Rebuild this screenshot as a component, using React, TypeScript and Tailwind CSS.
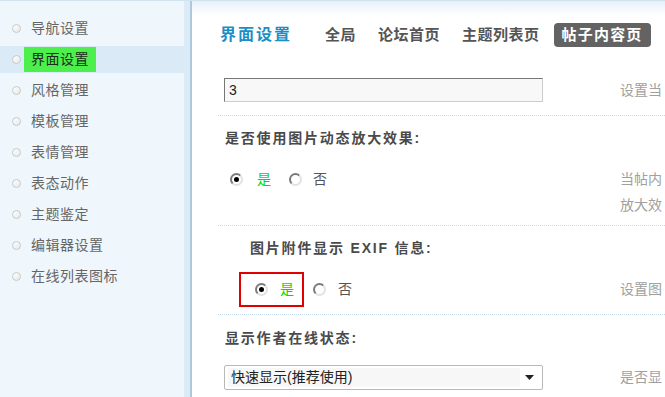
import type { ReactNode } from "react";

const menu = [
  "导航设置",
  "界面设置",
  "风格管理",
  "模板管理",
  "表情管理",
  "表态动作",
  "主题鉴定",
  "编辑器设置",
  "在线列表图标",
];

const tabs = ["全局", "论坛首页", "主题列表页"];

function Radio({ checked }: { checked?: boolean }) {
  return (
    <span className="flex h-[13px] w-[13px] shrink-0 items-center justify-center rounded-full border-2 border-t-[#7a7a7a] border-l-[#7a7a7a] border-b-[#e2e2e2] border-r-[#e2e2e2] bg-white">
      {checked ? <span className="h-[5px] w-[5px] rounded-full bg-black" /> : null}
    </span>
  );
}

function Separator() {
  return <div className="-ml-[6px] border-t border-dotted border-[#c3dcec]" />;
}

function Label({ children, indent }: { children: ReactNode; indent?: boolean }) {
  return (
    <div
      className={`flex h-[22px] items-center text-[14px] font-bold tracking-[1.8px] text-[#4a4a4a] ${
        indent ? "ml-[26px]" : "ml-[1px]"
      }`}
    >
      {children}
    </div>
  );
}

function Row({ children, desc }: { children: ReactNode; desc: ReactNode }) {
  return (
    <div className="flex">
      <div className="w-[396px] shrink-0">{children}</div>
      <div className="whitespace-nowrap text-[14px] text-[#a0a0a0]">{desc}</div>
    </div>
  );
}

export default function App() {
  return (
    <div className="flex h-[397px] w-[665px] overflow-hidden border-t border-[#cfe2f0] bg-white font-['Liberation_Sans','Noto_Sans_CJK_SC',sans-serif]">
      <aside className="flex w-[184px] shrink-0 flex-col gap-[4px] bg-[#eff7fc] pt-[14px]">
        {menu.map((item) => {
          const active = item === "界面设置";
          return (
            <div
              key={item}
              className={`flex h-[27px] items-center pl-[12px] ${active ? "bg-[#dbeaf7]" : ""}`}
            >
              <span className="h-[9px] w-[9px] shrink-0 rounded-full border border-[#c8c8c8] bg-gradient-to-br from-white to-[#e8e8e8]" />
              <span
                className={`ml-[3px] flex h-[25px] items-center px-[7px] text-[14px] tracking-[0.5px] ${
                  active ? "bg-[#4def4d] text-[#1e2a1e]" : "text-[#666666]"
                }`}
              >
                {item}
              </span>
            </div>
          );
        })}
      </aside>
      <div className="w-[6px] shrink-0 bg-[#dcebf8]" />
      <div className="w-[2px] shrink-0 bg-[#adcadb]" />

      <main className="flex min-w-0 flex-1 flex-col bg-gradient-to-b from-[#e4f0f9] via-white via-[14px] to-white pl-[32px]">
        <div className="mt-[22px] flex h-[24px] items-center">
          <span className="-ml-[4px] text-[16px] font-bold tracking-[2px] text-[#1a8fc6]">界面设置</span>
          <div className="ml-[25px] flex items-center gap-[6px]">
            {tabs.map((tab) => (
              <span
                key={tab}
                className="px-[8px] text-[15px] font-bold tracking-[0.5px] text-[#555555]"
              >
                {tab}
              </span>
            ))}
            <span className="flex h-[24px] items-center rounded-[4px] bg-[#636363] px-[8px] text-[15px] font-bold tracking-[1.2px] text-white">
              帖子内容页
            </span>
          </div>
        </div>

        <div className="mt-[31px]">
          <Row desc={<div className="flex h-[24px] items-center">设置当</div>}>
            <div className="flex h-[24px] w-[319px] items-center border border-t-[#777777] border-l-[#777777] border-b-[#cccccc] border-r-[#cccccc] bg-[#f8f8f8] pl-[4px] text-[14px] text-[#222222]">
              3
            </div>
          </Row>
        </div>

        <div className="mt-[13px]">
          <Separator />
        </div>

        <div className="mt-[11px]">
          <Label>是否使用图片动态放大效果:</Label>
        </div>

        <div className="mt-[17px]">
          <Row
            desc={
              <div className="leading-[26px]">
                当帖内
                <br />
                放大效
              </div>
            }
          >
            <div className="flex h-[26px] items-center text-[14px]">
              <span className="ml-[6px]">
                <Radio checked />
              </span>
              <span className="ml-[14px] text-[#00dd00]">是</span>
              <span className="ml-[18px]">
                <Radio />
              </span>
              <span className="ml-[11px] text-[#555555]">否</span>
            </div>
          </Row>
        </div>

        <div className="mt-[7px]">
          <Separator />
        </div>

        <div className="mt-[11px]">
          <Label indent>图片附件显示 EXIF 信息:</Label>
        </div>

        <div className="mt-[13px]">
          <Row desc={<div className="flex h-[35px] items-center">设置图</div>}>
            <div className="flex h-[35px] items-center text-[14px]">
              <div className="ml-[15px] flex h-[35px] w-[65px] items-center border-2 border-[#e00000] pl-[14px]">
                <Radio checked />
                <span className="ml-[12px] text-[#00dd00]">是</span>
              </div>
              <span className="ml-[9px]">
                <Radio />
              </span>
              <span className="ml-[12px] text-[#555555]">否</span>
            </div>
          </Row>
        </div>

        <div className="mt-[7px]">
          <Separator />
        </div>

        <div className="mt-[12px]">
          <Label>显示作者在线状态:</Label>
        </div>

        <div className="mt-[16px]">
          <Row desc={<div className="flex h-[25px] items-center">是否显</div>}>
            <div className="flex h-[25px] w-[319px] items-center rounded-[2px] border border-[#b9b9b9] bg-white px-[3px]">
              <div className="flex h-[19px] w-[292px] items-center bg-[#f7f7f7] pl-[3px] text-[14px] text-[#222222]">
                快速显示(推荐使用)
              </div>
              <svg width="9" height="5" viewBox="0 0 9 5" className="ml-[5px]">
                <path d="M0 0h9L4.5 5z" fill="#222222" />
              </svg>
            </div>
          </Row>
        </div>
      </main>
    </div>
  );
}
